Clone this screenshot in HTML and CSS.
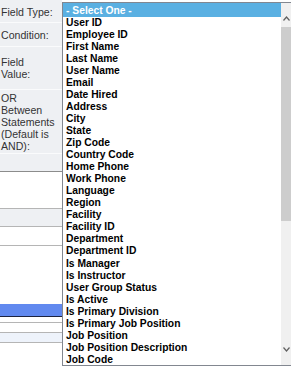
FILE: index.html
```html
<!DOCTYPE html>
<html lang="en">
<head>
  <meta charset="UTF-8" />
  <meta name="viewport" content="width=device-width, initial-scale=1.0"/>
  <title>Filter</title>
  <link rel="stylesheet" href="styles.css">
</head>
<body>
  <table class="filter">
    <tr class="r1"><th>Field Type:</th><td></td></tr>
    <tr class="r2"><th>Condition:</th><td></td></tr>
    <tr class="r3"><th>Field Value:</th><td></td></tr>
    <tr class="r4"><th>OR Between Statements (Default is AND):</th><td></td></tr>
    <tr class="r5"><th></th><td></td></tr>
  </table>

  <!-- rows of the page under the open list -->
  <div class="band dark"></div>
  <div class="band gap36"></div>
  <div class="band line shade h17"></div>
  <div class="band line h18"></div>
  <div class="band line h58"></div>
  <div class="band chosen"></div>
  <div class="band h5"></div>
  <div class="band line h9"></div>
  <div class="band line pale h9"></div>
  <div class="band line"></div>

  <div class="dropdown">
    <ul class="options">
      <li class="selected">- Select One -</li>
      <li>User ID</li>
      <li>Employee ID</li>
      <li>First Name</li>
      <li>Last Name</li>
      <li>User Name</li>
      <li>Email</li>
      <li>Date Hired</li>
      <li>Address</li>
      <li>City</li>
      <li>State</li>
      <li>Zip Code</li>
      <li>Country Code</li>
      <li>Home Phone</li>
      <li>Work Phone</li>
      <li>Language</li>
      <li>Region</li>
      <li>Facility</li>
      <li>Facility ID</li>
      <li>Department</li>
      <li>Department ID</li>
      <li>Is Manager</li>
      <li>Is Instructor</li>
      <li>User Group Status</li>
      <li>Is Active</li>
      <li>Is Primary Division</li>
      <li>Is Primary Job Position</li>
      <li>Job Position</li>
      <li>Job Position Description</li>
      <li>Job Code</li>
    </ul>
    <div class="scroll">
      <div class="btn up">
        <svg width="7" height="5" viewBox="0 0 7 5"><polyline points="0.5,4.5 3.5,1 6.5,4.5" fill="none" stroke="#606060" stroke-width="1.2"/></svg>
      </div>
      <div class="thumb"></div>
      <div class="track"></div>
      <div class="btn down">
        <svg width="7" height="5" viewBox="0 0 7 5"><polyline points="0.5,0.5 3.5,4 6.5,0.5" fill="none" stroke="#606060" stroke-width="1.2"/></svg>
      </div>
    </div>
  </div>
</body>
</html>
```

FILE: styles.css
```css
body {
  margin: 0;
  font-family: "Liberation Sans", Arial, sans-serif;
  background-color: #fff;
  overflow: hidden;
}

.filter {
  border-collapse: collapse;
  width: 100%;
}

.filter th {
  width: 55px;
  padding: 0 6px 0 1px;
  text-align: left;
  font-weight: normal;
  font-size: 10.6px;
  line-height: 12px;
  color: #333;
  background-color: #eef0f3;
  border-bottom: 1px solid #fafbfc;
  vertical-align: top;
}

.filter td {
  padding: 0;
}

.r1 th { padding-top: 6px; height: 16px; }
.r2 th { padding-top: 6px; height: 17px; }
.r3 th { padding-top: 9px; height: 33px; }
.r4 th { padding-top: 2px; height: 61px; }
.r5 th { height: 17px; border-bottom: 0; }

.band {
  height: 0;
}

.band.dark {
  height: 1px;
  background-color: #8c8c8c;
}

.band.line {
  border-top: 1px solid #b5b5b5;
}

.band.shade {
  background-color: #eef0f3;
}

.band.pale {
  background-color: #eef3fb;
}

.gap36 { height: 36px; }
.h17 { height: 17px; }
.h18 { height: 18px; }
.h58 { height: 58px; }
.h5 { height: 5px; }
.h9 { height: 9px; }

.band.chosen {
  height: 12px;
  background-color: #6189ef;
  border-bottom: 1px solid #1c2340;
}

.dropdown {
  position: absolute;
  top: 2px;
  left: 62px;
  right: 0;
  height: 364px;
  box-sizing: border-box;
  border: 1px solid #828790;
  border-right: 0;
  background-color: #fff;
  display: flex;
}

.options {
  flex: 1;
  list-style: none;
  margin: 0;
  padding: 0;
  overflow: hidden;
}

.options li {
  height: 12.05px;
  line-height: 12.05px;
  padding-left: 3px;
  font-size: 10.3px;
  font-weight: bold;
  color: #000;
  white-space: nowrap;
}

.options li.selected {
  padding-top: 1.55px;
  background-color: #5ab0e2;
  color: #fff;
}

.scroll {
  width: 10px;
  background-color: #f0f0f0;
  display: flex;
  flex-direction: column;
}

.scroll .btn {
  height: 24px;
  padding-left: 2px;
}

.scroll .btn svg {
  display: block;
}

.scroll .up svg {
  margin-top: 13px;
}

.scroll .down svg {
  margin-top: 6px;
}

.thumb {
  height: 194px;
  background-color: #cdcdcd;
}

.track {
  flex: 1;
}
```
